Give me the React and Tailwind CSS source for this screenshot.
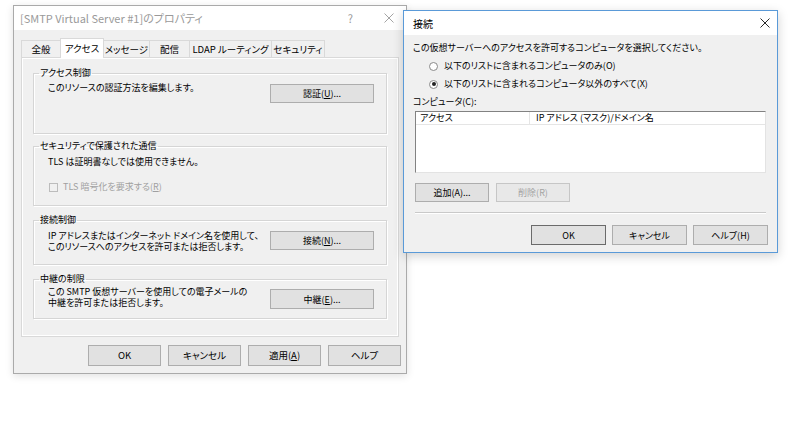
import React from "react";

const FONT = "font-['Noto_Sans_CJK_JP','Noto_Sans',sans-serif] [font-feature-settings:'palt']";

function Btn({ children, className = "", disabled = false, isDefault = false }) {
  return (
    <div
      className={`flex items-center justify-center border leading-none ${
        disabled
          ? "border-[#c6c6c6] bg-[#e8e8e8] text-[#a3a3a3]"
          : isDefault
          ? "border-[#6b6b6b] bg-[#e1e1e1] text-black"
          : "border-[#adadad] bg-[#e1e1e1] text-black"
      } ${className}`}
    >
      {children}
    </div>
  );
}

function CloseGlyph({ color = "#000", size = 10 }) {
  return (
    <svg width={size} height={size} viewBox="0 0 10 10">
      <path d="M0.5 0.5 L9.5 9.5 M9.5 0.5 L0.5 9.5" stroke={color} strokeWidth="0.9" fill="none" />
    </svg>
  );
}

function Group({ title, className = "", children }) {
  return (
    <fieldset
      className={`border border-[#d5d5d5] shadow-[inset_1px_1px_0_#fff,1px_1px_0_#fff] ${className}`}
    >
      <legend className="ml-[5px] px-[1px] leading-[12px]">{title}</legend>
      {children}
    </fieldset>
  );
}

const tabs = [
  { label: "全般", w: "w-[40px]" },
  { label: "アクセス", w: "w-[44px]", active: true },
  { label: "メッセージ", w: "w-[47px]" },
  { label: "配信", w: "w-[41px]" },
  { label: "LDAP ルーティング", w: "w-[83px]" },
  { label: "セキュリティ", w: "w-[54px]" },
];

function PropertiesDialog() {
  return (
    <div className="absolute left-[13px] top-[5px] flex h-[369px] w-[394px] flex-col border border-[#aaaaaa] bg-[#f0f0f0] shadow-[0_2px_8px_rgba(0,0,0,0.12)]">
      {/* title bar (inactive) */}
      <div className="flex h-[24px] items-center bg-white pl-[6px] text-[11px] text-[#9a9a9a]">
        <span>[SMTP Virtual Server #1]のプロパティ</span>
        <span className="ml-auto mr-[31px] text-[11px]">?</span>
        <span className="mr-[12px] flex">
          <CloseGlyph color="#9a9a9a" />
        </span>
      </div>

      <div className="px-[7px] pt-[8px]">
        {/* tabs */}
        <div className="flex h-[19px] items-end pl-[1px] text-[9.5px]">
          {tabs.map((t) =>
            t.active ? (
              <div
                key={t.label}
                className={`${t.w} relative z-10 -mb-[1px] -ml-[1px] flex h-[20px] items-start justify-center border border-b-0 border-[#d9d9d9] bg-white pt-[2px]`}
              >
                {t.label}
              </div>
            ) : (
              <div
                key={t.label}
                className={`${t.w} -ml-[1px] flex h-[17px] items-center justify-center border border-b-0 border-[#d9d9d9] bg-[#f0f0f0]`}
              >
                {t.label}
              </div>
            )
          )}
        </div>

        {/* tab panel */}
        <div className="h-[280px] border border-[#d9d9d9] bg-[#f0f0f0] px-[11px] pt-[9px] text-[9px] shadow-[inset_1px_1px_0_#fff,inset_-1px_-1px_0_#fff]">
          <Group title="アクセス制御" className="h-[67px]">
            <div className="mt-[3px] flex items-start">
              <span className="ml-[14px] leading-[12px]">このリソースの認証方法を編集します。</span>
              <Btn className="ml-auto mr-[12px] mt-[2px] h-[19px] w-[104px]">
                認証(<u>U</u>)...
              </Btn>
            </div>
          </Group>

          <Group title="セキュリティで保護された通信" className="mt-[6px] h-[66px]">
            <div className="ml-[14px] mt-[4px] leading-[12px]">TLS は証明書なしでは使用できません。</div>
            <div className="ml-[15px] mt-[13px] flex items-center text-[#a0a0a0]">
              <span className="h-[9px] w-[9px] border border-[#bcbcbc] bg-[#f0f0f0]" />
              <span className="ml-[5px] leading-[12px]">
                TLS 暗号化を要求する(<u>R</u>)
              </span>
            </div>
          </Group>

          <Group title="接続制御" className="mt-[8px] h-[51px]">
            <div className="mt-[4px] flex items-start">
              <span className="ml-[14px] leading-[11px]">
                IP アドレスまたはインターネット ドメイン名を使用して、
                <br />
                このリソースへのアクセスを許可または拒否します。
              </span>
              <Btn className="ml-auto mr-[12px] mt-[1px] h-[19px] w-[104px]">
                接続(<u>N</u>)...
              </Btn>
            </div>
          </Group>

          <Group title="中継の制限" className="mt-[8px] h-[46px]">
            <div className="mt-[1px] flex items-start">
              <span className="ml-[14px] leading-[11px]">
                この SMTP 仮想サーバーを使用しての電子メールの
                <br />
                中継を許可または拒否します。
              </span>
              <Btn className="ml-auto mr-[12px] mt-[3px] h-[20px] w-[104px]">
                中継(<u>E</u>)...
              </Btn>
            </div>
          </Group>
        </div>
      </div>

      {/* dialog buttons */}
      <div className="mt-[8px] flex justify-end gap-[7px] pr-[5px] text-[9.5px]">
        <Btn className="h-[21px] w-[73px]">OK</Btn>
        <Btn className="h-[21px] w-[73px]">キャンセル</Btn>
        <Btn className="h-[21px] w-[73px]">
          適用(<u>A</u>)
        </Btn>
        <Btn className="h-[21px] w-[73px]">ヘルプ</Btn>
      </div>
    </div>
  );
}

function Radio({ checked, label }) {
  return (
    <div className="flex h-[12px] items-center pl-[16px]">
      <span className="flex h-[9px] w-[9px] items-center justify-center rounded-full border border-[#8a8a8a] bg-white">
        {checked && <span className="h-[4px] w-[4px] rounded-full bg-[#222]" />}
      </span>
      <span className="ml-[6px] leading-[12px]">{label}</span>
    </div>
  );
}

function ConnectionDialog() {
  return (
    <div className="absolute left-[403px] top-[10px] flex h-[243px] w-[375px] flex-col border border-[#5a9ad8] bg-[#f0f0f0] shadow-[0_3px_10px_rgba(0,0,0,0.18)]">
      <div className="flex h-[24px] items-center bg-white pl-[9px] text-[10px] text-black">
        <span>接続</span>
        <span className="ml-auto mr-[7px] flex">
          <CloseGlyph color="#111" />
        </span>
      </div>

      <div className="flex flex-1 flex-col px-[9px] pt-[7px] text-[9px]">
        <div className="leading-[12px]">この仮想サーバーへのアクセスを許可するコンピュータを選択してください。</div>
        <div className="mt-[6px] flex flex-col gap-[6px]">
          <Radio label="以下のリストに含まれるコンピュータのみ(O)" />
          <Radio checked label="以下のリストに含まれるコンピュータ以外のすべて(X)" />
        </div>
        <div className="mt-[6px] leading-[12px]">コンピュータ(C):</div>

        {/* list view */}
        <div className="ml-[2px] mr-[2px] mt-[3px] h-[62px] border border-b-[#e3e3e3] border-l-[#828282] border-r-[#e3e3e3] border-t-[#828282] bg-white">
          <div className="flex h-[13px] border-b border-[#e5e5e5] leading-[12px]">
            <div className="w-[114px] border-r border-[#e5e5e5] pl-[4px]">アクセス</div>
            <div className="pl-[6px]">IP アドレス (マスク)/ドメイン名</div>
          </div>
        </div>

        <div className="ml-[2px] mt-[10px] flex gap-[7px]">
          <Btn className="h-[19px] w-[74px]">追加(A)...</Btn>
          <Btn disabled className="h-[19px] w-[74px]">
            削除(R)
          </Btn>
        </div>

        <div className="ml-[2px] mr-[2px] mt-[10px] h-[2px] border-t border-[#c9c9c9] border-b border-b-white" />

        <div className="mt-[11px] flex justify-end gap-[6px]">
          <Btn isDefault className="h-[20px] w-[75px]">
            OK
          </Btn>
          <Btn className="h-[20px] w-[75px]">キャンセル</Btn>
          <Btn className="h-[20px] w-[75px]">ヘルプ(H)</Btn>
        </div>
      </div>
    </div>
  );
}

export default function App() {
  return (
    <div className={`relative h-[446px] w-[790px] overflow-hidden bg-white text-black ${FONT}`}>
      <PropertiesDialog />
      <ConnectionDialog />
    </div>
  );
}
